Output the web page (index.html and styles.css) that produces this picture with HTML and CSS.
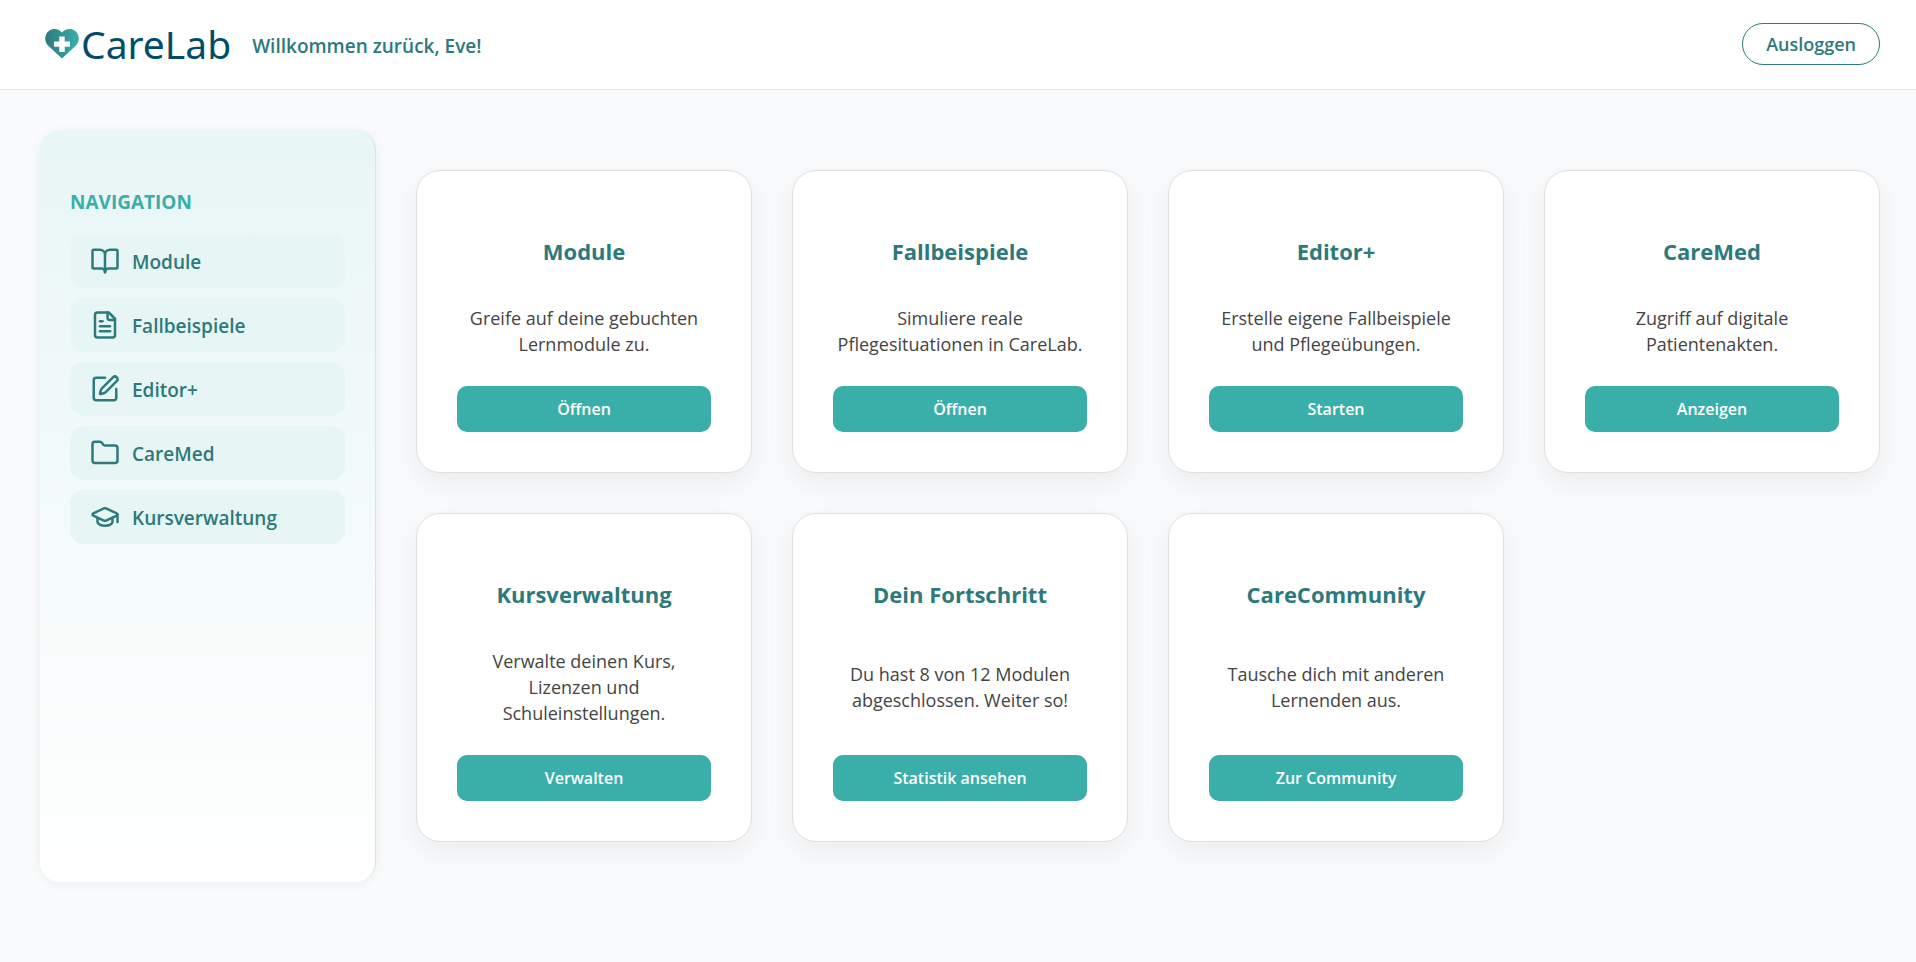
FILE: index.html
```html
<!DOCTYPE html>
<html lang="de">
<head>
    <meta charset="UTF-8">
    <meta name="viewport" content="width=device-width, initial-scale=1.0">
    <title>CareLab Dashboard</title>
    <link rel="stylesheet" href="styles.css">
</head>
<body>
    <header class="header">
        <div class="header-left">
            <a class="logo" href="#">
                <svg class="logo-icon" viewBox="0 0 34 30" aria-hidden="true">
                    <defs>
                        <linearGradient id="heart" x1="0" y1="0" x2="1" y2="0">
                            <stop offset="0" stop-color="#2c7a7b"/>
                            <stop offset="1" stop-color="#3aafa9"/>
                        </linearGradient>
                    </defs>
                    <path fill="url(#heart)" d="M17 29.500L3 16.500C-1.200 12-.6 4.500 4.500 1.400C9-1 14-.2 17 3.500C20-.2 25-1 29.500 1.400C34.600 4.500 35.200 12 31 16.500Z"/>
                    <path fill="#fff" d="M14.300 7.500h5.400v5h5.300v5.200h-5.300v5.300h-5.400v-5.300H9v-5.200h5.300z"/>
                </svg>
                <span class="logo-text">CareLab</span>
            </a>
            <span class="welcome">Willkommen zurück, Eve!</span>
        </div>
        <button class="logout" type="button">Ausloggen</button>
    </header>

    <div class="layout">
        <aside class="sidebar">
            <h2>Navigation</h2>
            <nav class="nav">
                <a href="#">
                    <svg viewBox="0 0 24 24" aria-hidden="true"><path d="M12 7v14"/><path d="M3 18a1 1 0 0 1-1-1V4a1 1 0 0 1 1-1h5a4 4 0 0 1 4 4 4 4 0 0 1 4-4h5a1 1 0 0 1 1 1v13a1 1 0 0 1-1 1h-6a3 3 0 0 0-3 3 3 3 0 0 0-3-3z"/></svg>
                    <span>Module</span>
                </a>
                <a href="#">
                    <svg viewBox="0 0 24 24" aria-hidden="true"><path d="M15 2H6a2 2 0 0 0-2 2v16a2 2 0 0 0 2 2h12a2 2 0 0 0 2-2V7Z"/><path d="M14 2v4a2 2 0 0 0 2 2h4"/><path d="M10 9H8"/><path d="M16 13H8"/><path d="M16 17H8"/></svg>
                    <span>Fallbeispiele</span>
                </a>
                <a href="#">
                    <svg viewBox="0 0 24 24" aria-hidden="true"><path d="M12 3H5a2 2 0 0 0-2 2v14a2 2 0 0 0 2 2h14a2 2 0 0 0 2-2v-7"/><path d="M18.375 2.625a1 1 0 0 1 3 3l-9.013 9.014a2 2 0 0 1-.853.505l-2.873.84a.5.5 0 0 1-.62-.62l.84-2.873a2 2 0 0 1 .506-.852z"/></svg>
                    <span>Editor+</span>
                </a>
                <a href="#">
                    <svg viewBox="0 0 24 24" aria-hidden="true"><path d="M20 20a2 2 0 0 0 2-2V8a2 2 0 0 0-2-2h-7.900a2 2 0 0 1-1.690-.9L9.600 3.900A2 2 0 0 0 7.930 3H4a2 2 0 0 0-2 2v13a2 2 0 0 0 2 2Z"/></svg>
                    <span>CareMed</span>
                </a>
                <a href="#">
                    <svg viewBox="0 0 24 24" aria-hidden="true"><path d="M21.420 10.922a1 1 0 0 0-.019-1.838L12.830 5.180a2 2 0 0 0-1.660 0L2.600 9.080a1 1 0 0 0 0 1.832l8.570 3.908a2 2 0 0 0 1.660 0z"/><path d="M22 10v6"/><path d="M6 12.500V16a6 3 0 0 0 12 0v-3.500"/></svg>
                    <span>Kursverwaltung</span>
                </a>
            </nav>
        </aside>

        <main class="cards">
            <section class="card">
                <h3>Module</h3>
                <p>Greife auf deine gebuchten Lernmodule zu.</p>
                <button type="button">Öffnen</button>
            </section>
            <section class="card">
                <h3>Fallbeispiele</h3>
                <p>Simuliere reale Pflegesituationen in CareLab.</p>
                <button type="button">Öffnen</button>
            </section>
            <section class="card">
                <h3>Editor+</h3>
                <p>Erstelle eigene Fallbeispiele und Pflegeübungen.</p>
                <button type="button">Starten</button>
            </section>
            <section class="card">
                <h3>CareMed</h3>
                <p>Zugriff auf digitale Patientenakten.</p>
                <button type="button">Anzeigen</button>
            </section>
            <section class="card">
                <h3>Kursverwaltung</h3>
                <p>Verwalte deinen Kurs, Lizenzen und Schuleinstellungen.</p>
                <button type="button">Verwalten</button>
            </section>
            <section class="card">
                <h3>Dein Fortschritt</h3>
                <p>Du hast 8 von 12 Modulen abgeschlossen. Weiter so!</p>
                <button type="button">Statistik ansehen</button>
            </section>
            <section class="card">
                <h3>CareCommunity</h3>
                <p>Tausche dich mit anderen Lernenden aus.</p>
                <button type="button">Zur Community</button>
            </section>
        </main>
    </div>
</body>
</html>
```

FILE: styles.css
```css
* {
    box-sizing: border-box;
}
body {
    margin: 0;
    font-family: "Segoe UI", "Open Sans", "Noto Sans", sans-serif;
    background: #f9fafc;
    color: #444;
}
button {
    font-family: inherit;
    cursor: pointer;
}

/* Header */
.header {
    display: flex;
    justify-content: space-between;
    align-items: center;
    min-height: 90px;
    padding: 0 36px 2px 45px;
    background: #fff;
    border-bottom: 1px solid #e5e5e5;
}
.header-left {
    display: flex;
    align-items: center;
    gap: 21px;
}
.logo {
    display: flex;
    align-items: center;
    gap: 2px;
    color: #004c6b;
    text-decoration: none;
}
.logo-icon {
    width: 34px;
    height: 30px;
}
.logo-text {
    font-family: "Noto Sans", sans-serif;
    font-size: 39px;
    line-height: 44px;
}
.welcome {
    padding-top: 4px;
    font-size: 19px;
    font-weight: 600;
    color: #2c7a7b;
}
.logout {
    height: 42px;
    padding: 0 23px;
    border: 1px solid #2c7a7b;
    border-radius: 21px;
    background: #fff;
    color: #2c7a7b;
    font-size: 18px;
    font-weight: 600;
}
.logout:hover {
    background: #e8f6f5;
}

/* Layout */
.layout {
    display: grid;
    grid-template-columns: 336px 1fr;
    gap: 40px;
    padding: 40px 36px 40px 40px;
}

/* Sidebar */
.sidebar {
    padding: 60px 30px 40px;
    background: linear-gradient(to bottom, #e8f6f5, #fff);
    border-right: 1px solid #e0e0e0;
    border-radius: 20px;
    box-shadow: 0 2px 12px rgba(0, 0, 0, 0.05);
}
.sidebar h2 {
    margin: 0 0 20px;
    font-size: 19px;
    line-height: 24px;
    text-transform: uppercase;
    color: #3aafa9;
}
.nav {
    display: flex;
    flex-direction: column;
    gap: 10px;
}
.nav a {
    display: flex;
    align-items: center;
    gap: 12px;
    height: 54px;
    padding: 0 20px;
    border-radius: 14px;
    background: #e7f5f4;
    color: #2c7a7b;
    font-size: 19px;
    font-weight: 600;
    text-decoration: none;
}
.nav a:hover {
    background: #d5eeec;
}
.nav span {
    padding-top: 2px;
}
.nav svg {
    width: 30px;
    height: 30px;
    fill: none;
    stroke: currentColor;
    stroke-width: 2;
    stroke-linecap: round;
    stroke-linejoin: round;
}

/* Cards */
.cards {
    display: grid;
    grid-template-columns: repeat(auto-fit, minmax(300px, 1fr));
    gap: 40px;
    padding: 40px 0;
}
.card {
    display: flex;
    flex-direction: column;
    justify-content: space-between;
    padding: 40px;
    background: #fff;
    border: 1px solid #e0e0e0;
    border-radius: 24px;
    box-shadow: 0 10px 30px rgba(0, 0, 0, 0.06);
    text-align: center;
}
.card h3 {
    margin: 24px 0 38px;
    font-size: 22px;
    line-height: 32px;
    color: #2c7a7b;
}
.card p {
    margin: 0 0 29px;
    font-size: 18px;
    line-height: 26px;
}
.card button {
    height: 46px;
    border: none;
    border-radius: 10px;
    background: #3aafa9;
    color: #fff;
    font-size: 16px;
    font-weight: 600;
}
.card button:hover {
    background: #2c7a7b;
}
```
